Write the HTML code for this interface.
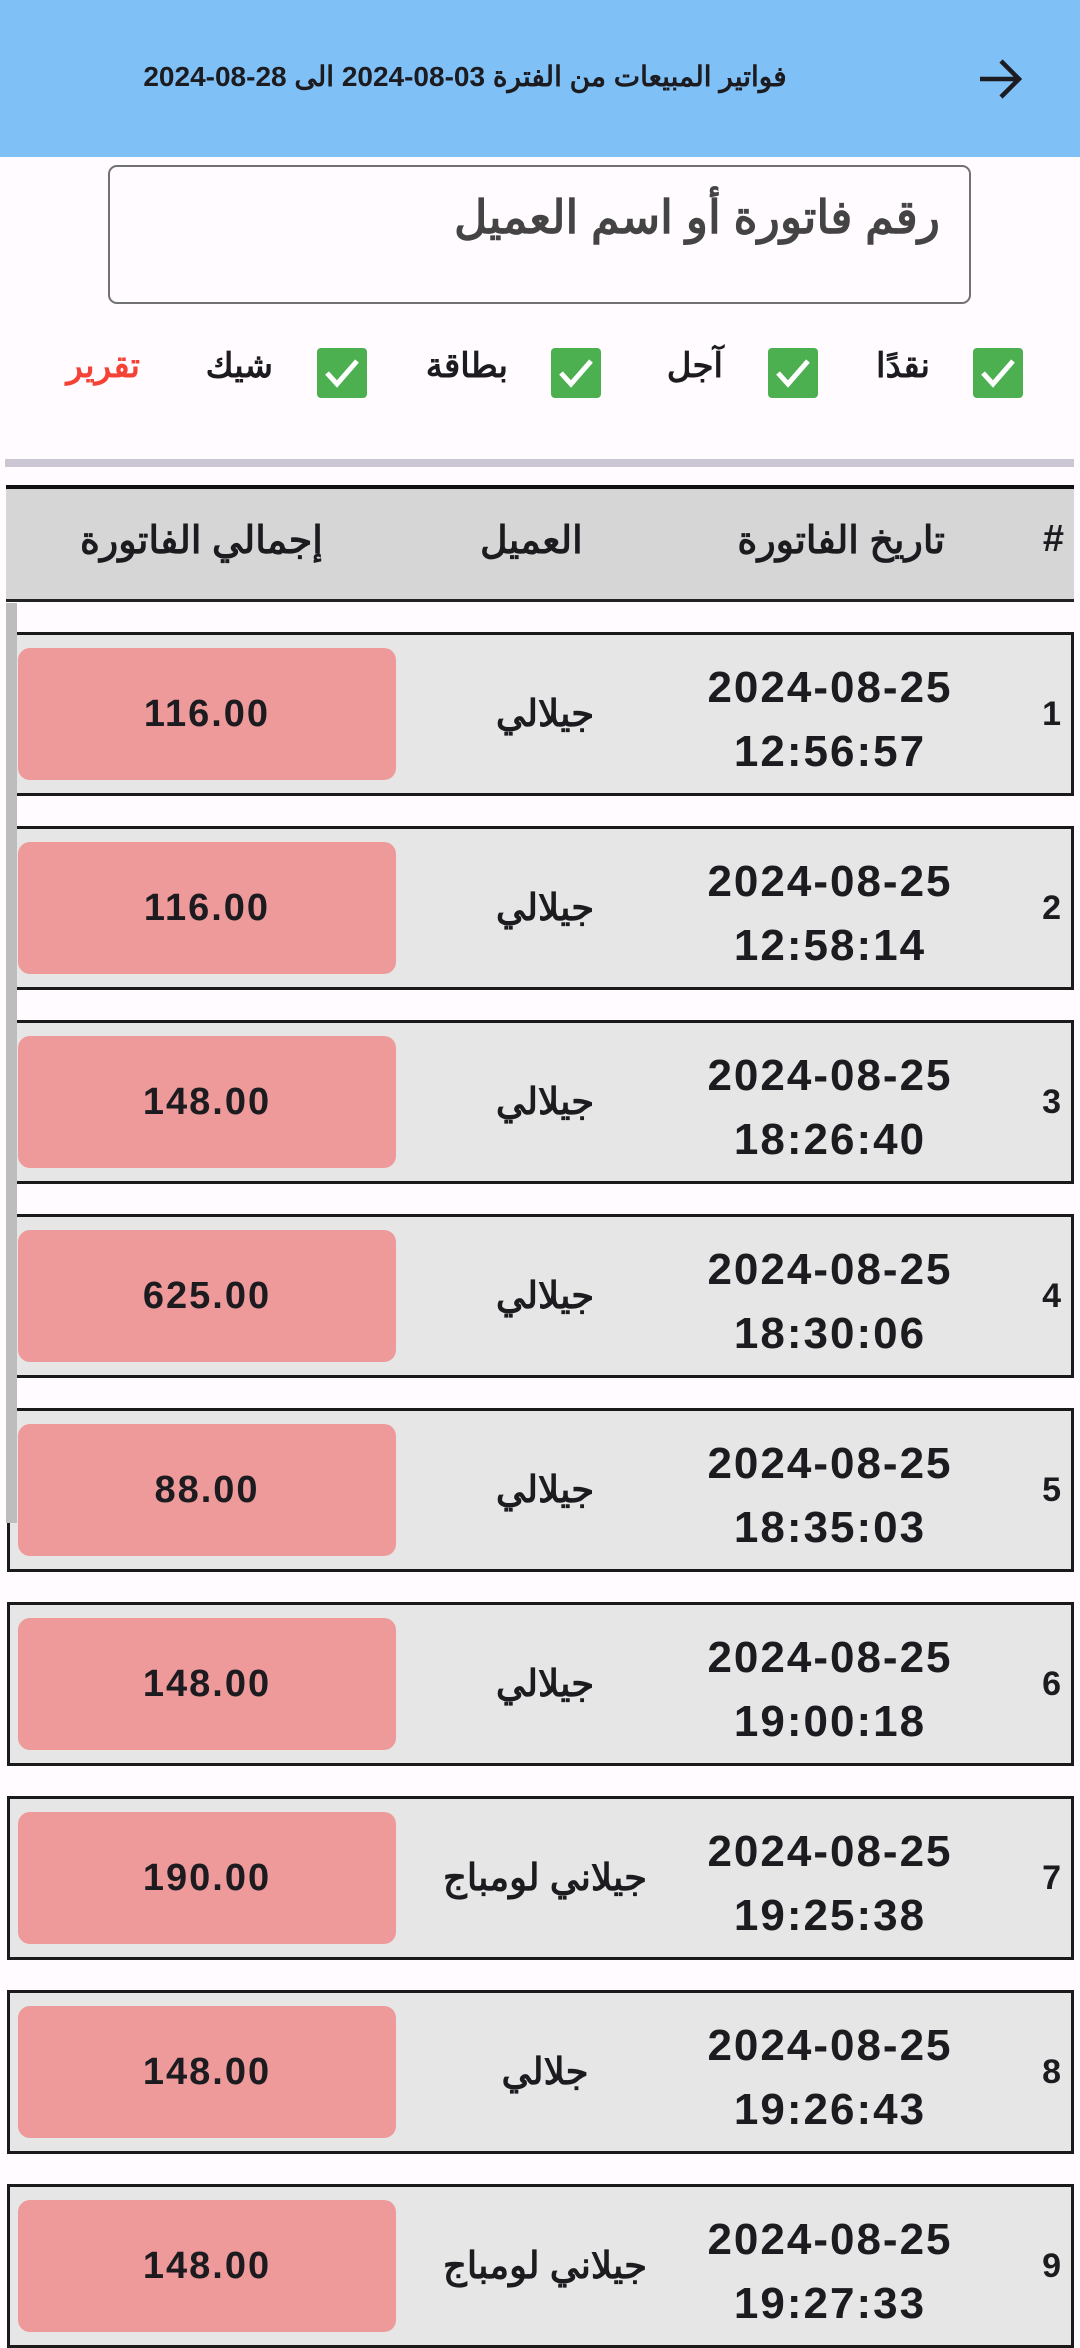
<!DOCTYPE html>
<html><head><meta charset="utf-8"><style>
*{margin:0;padding:0;box-sizing:border-box}
body{width:1080px;height:2298px;overflow:hidden;background:#fffbfe;font-family:"Liberation Sans","Noto Sans CJK SC",sans-serif;position:relative;color:#1c1b1f}
.a{position:absolute}
.ltr{direction:ltr;unicode-bidi:isolate}
.hdr{left:0;top:0;width:1080px;height:157px;background:#7fc0f7}
.title{left:124px;width:682px;top:60px;font-size:28px;font-weight:bold;direction:rtl;white-space:nowrap;color:#1c1b1f;text-align:center}
.search{left:108px;top:165px;width:863px;height:139px;border:2px solid #707075;border-radius:9px}
.ph{right:140px;top:190px;font-size:46px;font-weight:bold;color:#444;direction:rtl;white-space:nowrap}
.cb{width:50px;height:50px;top:348px;background:#4caf50;border-radius:4px}
.lbl{top:346px;font-size:34px;font-weight:bold;direction:rtl;white-space:nowrap}
.div{left:5px;top:459px;width:1069px;height:8px;background:#cbc6d3}
.th{left:6px;top:485px;width:1068px;height:117px;background:#d6d6d6;border-top:4px solid #111;border-bottom:3px solid #222}
.thx{top:518px;font-size:38px;font-weight:bold;direction:rtl;white-space:nowrap}
.row{left:7px;width:1067px;height:164px;background:#e6e6e6;border:3px solid #1a1a1a}
.amt{left:8px;top:13px;width:378px;height:132px;background:#ee9a9b;border-radius:12px;font-size:38px;font-weight:bold;text-align:center;line-height:132px;letter-spacing:2px}
.nm{left:400px;width:270px;top:0;height:158px;line-height:158px;text-align:center;font-size:37px;font-weight:bold;direction:rtl;white-space:nowrap}
.dt{left:680px;width:280px;text-align:center;font-size:44px;font-weight:bold;letter-spacing:2px;line-height:64px;top:21px}
.no{right:10px;top:0;line-height:158px;font-size:34px;font-weight:bold}
.sb{left:6px;top:603px;width:11px;height:920px;background:#bdbdbd}
</style></head><body>
<div class="a hdr"></div>
<div class="a title">فواتير المبيعات من الفترة <span class="ltr">2024-08-03</span> الى <span class="ltr">2024-08-28</span></div>
<svg class="a" style="left:976px;top:55px" width="48" height="48" viewBox="0 0 48 48"><path d="M4 24H42M25 6L43 24L25 42" fill="none" stroke="#1c1b1f" stroke-width="4.5"/></svg>
<div class="a search"></div>
<div class="a ph">رقم فاتورة أو اسم العميل</div>

<div class="a cb" style="left:973px"><svg width="50" height="50" viewBox="0 0 50 50"><path d="M10 25L20 36L40 13" fill="none" stroke="#fff" stroke-width="5"/></svg></div>
<div class="a lbl" style="right:150px">نقدًا</div>
<div class="a cb" style="left:768px"><svg width="50" height="50" viewBox="0 0 50 50"><path d="M10 25L20 36L40 13" fill="none" stroke="#fff" stroke-width="5"/></svg></div>
<div class="a lbl" style="right:357px">آجل</div>
<div class="a cb" style="left:551px"><svg width="50" height="50" viewBox="0 0 50 50"><path d="M10 25L20 36L40 13" fill="none" stroke="#fff" stroke-width="5"/></svg></div>
<div class="a lbl" style="right:572px">بطاقة</div>
<div class="a cb" style="left:317px"><svg width="50" height="50" viewBox="0 0 50 50"><path d="M10 25L20 36L40 13" fill="none" stroke="#fff" stroke-width="5"/></svg></div>
<div class="a lbl" style="right:807px">شيك</div>
<div class="a lbl" style="right:940px;color:#f44336">تقرير</div>

<div class="a div"></div>
<div class="a th"></div>
<div class="a thx" style="right:16px">#</div>
<div class="a thx" style="right:135px">تاريخ الفاتورة</div>
<div class="a thx" style="left:480px">العميل</div>
<div class="a thx" style="left:80px">إجمالي الفاتورة</div>

<div class="a row" style="top:632px"><div class="a amt">116.00</div><div class="a nm">جيلالي</div><div class="a dt">2024-08-25<br>12:56:57</div><div class="a no">1</div></div>
<div class="a row" style="top:826px"><div class="a amt">116.00</div><div class="a nm">جيلالي</div><div class="a dt">2024-08-25<br>12:58:14</div><div class="a no">2</div></div>
<div class="a row" style="top:1020px"><div class="a amt">148.00</div><div class="a nm">جيلالي</div><div class="a dt">2024-08-25<br>18:26:40</div><div class="a no">3</div></div>
<div class="a row" style="top:1214px"><div class="a amt">625.00</div><div class="a nm">جيلالي</div><div class="a dt">2024-08-25<br>18:30:06</div><div class="a no">4</div></div>
<div class="a row" style="top:1408px"><div class="a amt">88.00</div><div class="a nm">جيلالي</div><div class="a dt">2024-08-25<br>18:35:03</div><div class="a no">5</div></div>
<div class="a row" style="top:1602px"><div class="a amt">148.00</div><div class="a nm">جيلالي</div><div class="a dt">2024-08-25<br>19:00:18</div><div class="a no">6</div></div>
<div class="a row" style="top:1796px"><div class="a amt">190.00</div><div class="a nm">جيلاني لومباج</div><div class="a dt">2024-08-25<br>19:25:38</div><div class="a no">7</div></div>
<div class="a row" style="top:1990px"><div class="a amt">148.00</div><div class="a nm">جلالي</div><div class="a dt">2024-08-25<br>19:26:43</div><div class="a no">8</div></div>
<div class="a row" style="top:2184px"><div class="a amt">148.00</div><div class="a nm">جيلاني لومباج</div><div class="a dt">2024-08-25<br>19:27:33</div><div class="a no">9</div></div>
<div class="a sb"></div>
</body></html>
